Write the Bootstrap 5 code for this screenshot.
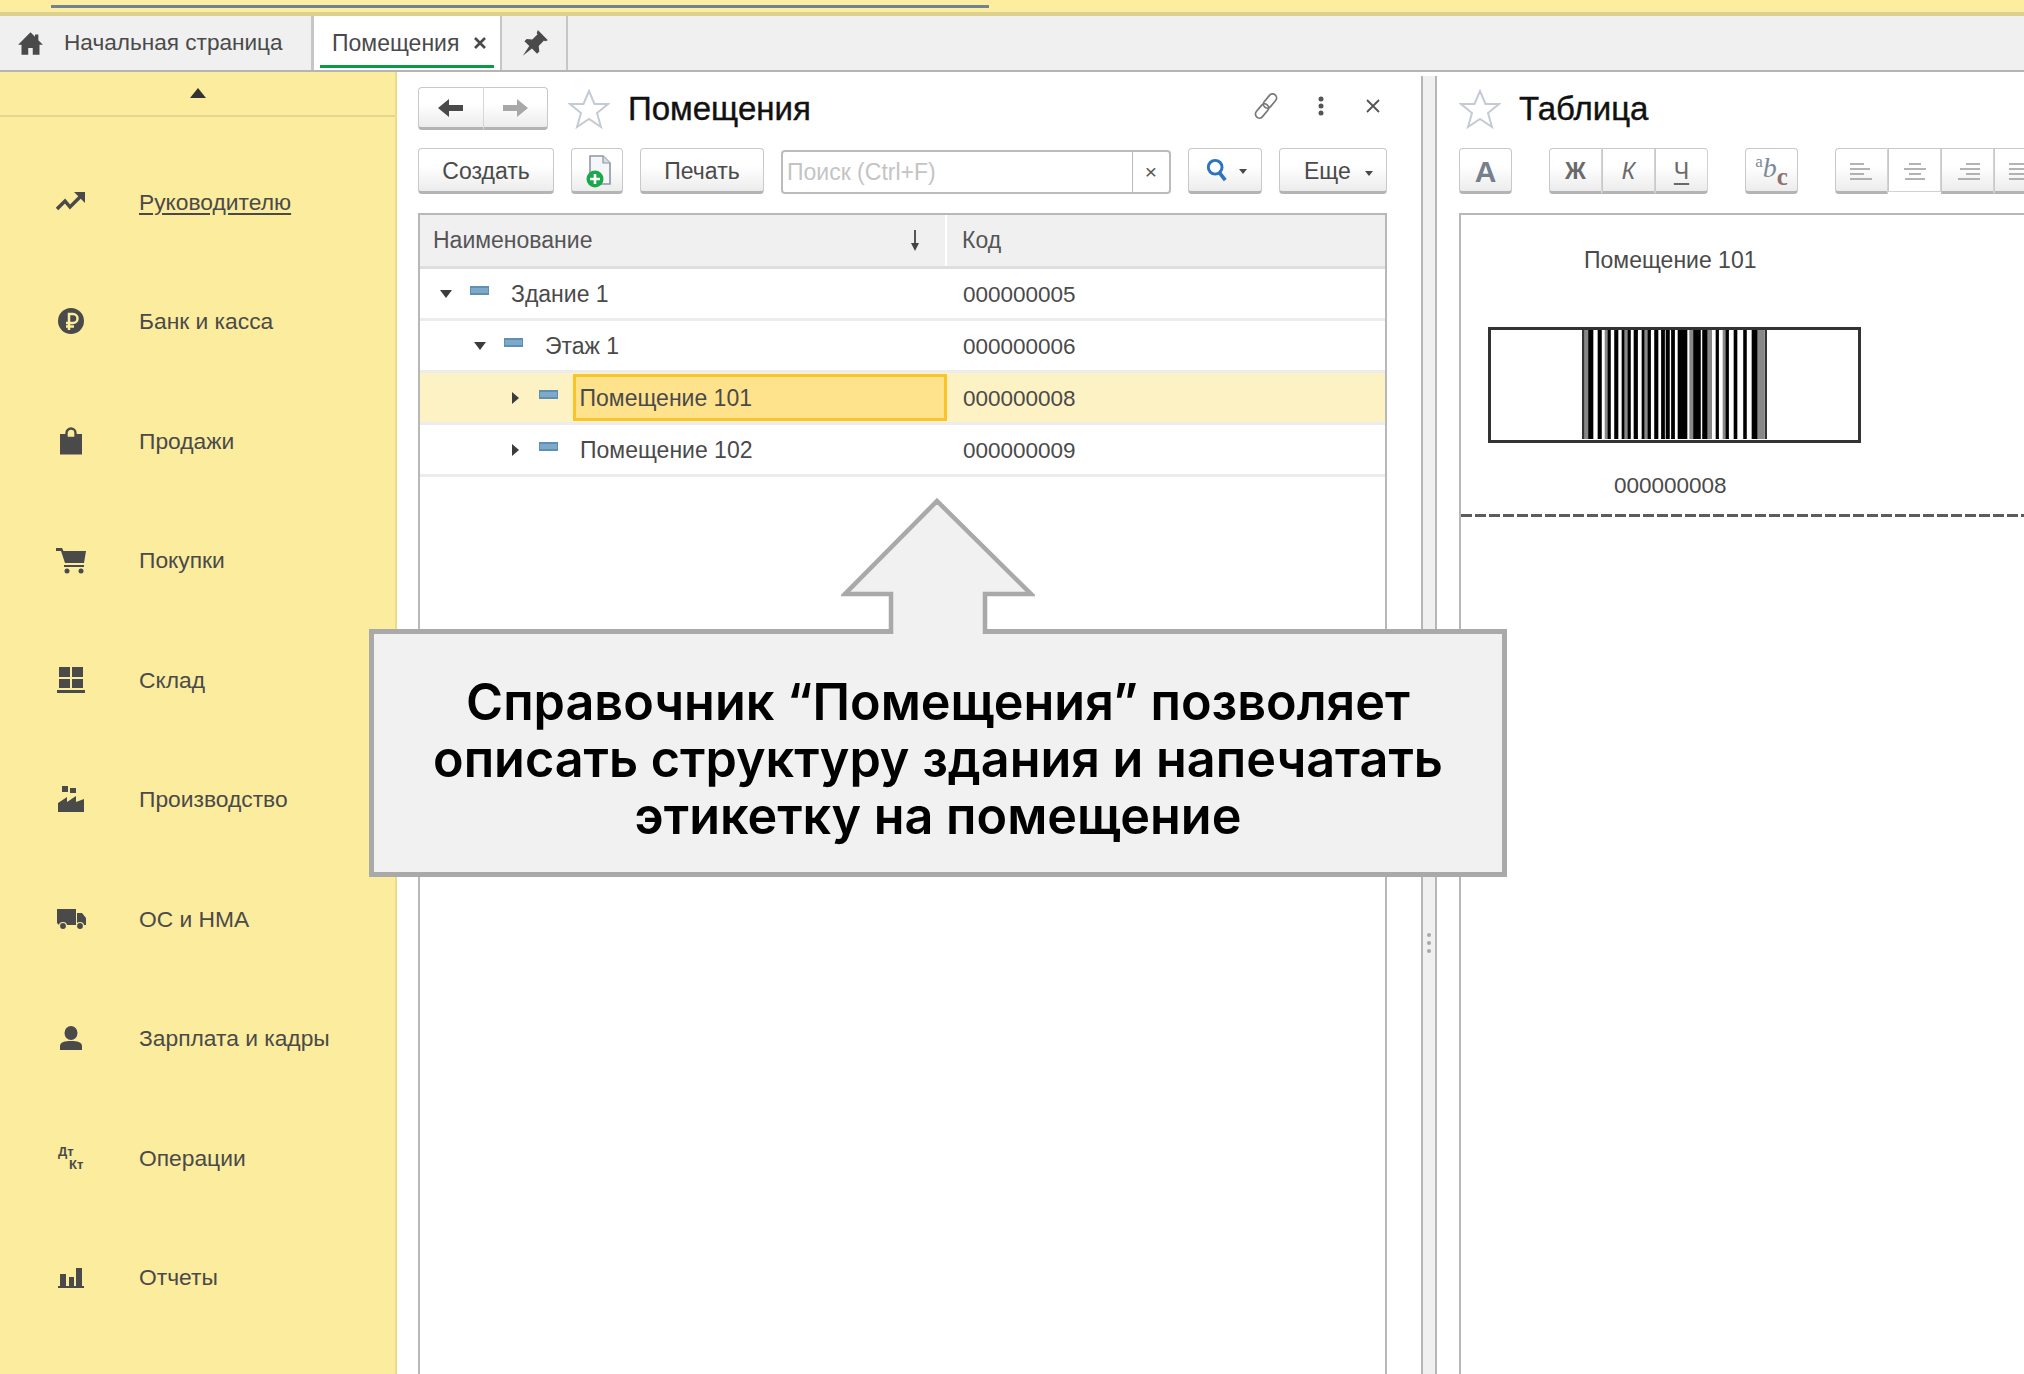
<!DOCTYPE html>
<html lang="ru">
<head>
<meta charset="utf-8">
<title>Помещения</title>
<link href="https://cdn.jsdelivr.net/npm/bootstrap@5.3.0/dist/css/bootstrap.min.css" rel="stylesheet">
<style>
html,body{height:100%;margin:0;overflow:hidden}
body{font-family:"Liberation Sans",Arial,sans-serif;font-size:23px;color:#4a4a4a;background:#fff;position:relative;width:2024px;height:1374px}
.topstrip{height:16px;background:linear-gradient(#fdee9f 0 12px,#dcd08c 12px);flex:none;overflow:hidden}
.topline{height:3px;margin-left:51px;width:938px;margin-top:5px;display:block;background:#6f8296}
.tabbar{height:56px;flex:none;background:#f0f0f0;border-bottom:2px solid #b4b4b4}
.tabit{height:100%;display:flex;align-items:center;border-right:2px solid #c6c6c6;position:relative}
.tab-home{width:313px;padding-left:17px;gap:20px;font-size:22.6px}
.tab-act{width:189px;background:#fff;padding-left:18px;gap:14px;border-left:1px solid #c6c6c6}
.tab-act::after{content:"";position:absolute;left:6px;right:6px;bottom:2px;height:3px;background:#0a9a44}
.tab-pin{width:66px;justify-content:center}
.side{width:397px;flex:none;background:#fcec9d;border-right:2px solid #ecdc8a}
.side-up{height:45px;border-bottom:2px solid #e4d68e;display:flex;justify-content:center;padding-top:16px}
.tri-up{width:0;height:0;border-left:8px solid transparent;border-right:8px solid transparent;border-bottom:10px solid #333}
.side-list{padding-top:25px}
.side-item{height:119.5px;display:flex;align-items:center;color:#4a4a4a;font-size:22.8px}
.side-ico{width:30px;margin-left:56px;margin-right:53px;display:flex;justify-content:center}
.side-item u{text-underline-offset:3px}
.work{min-width:0;background:#fff}
.leftpane{width:1024px;flex:none;padding:15px 34px 0 21px}
.rightpane{flex:1;min-width:0;padding:15px 0 0 22px;overflow:hidden}
.splitter{width:16px;flex:none;background:#f0f0f0;border-left:2px solid #b6b6b6;border-right:2px solid #b6b6b6;margin-top:4px;display:flex;flex-direction:column;align-items:center;justify-content:center;gap:4px;padding-top:436px}
.splitter i{width:4px;height:4px;border-radius:50%;background:#a8a8a8;display:block}
.headrow{height:43px}
.titletxt{font-size:33px;color:#111;line-height:1;-webkit-text-stroke:.4px #111}
.starw{margin:0 18px 0 20px;display:flex}
.headacts{margin-left:auto;padding-right:7px;margin-top:-5px}
.act-link{margin-right:37px;display:flex}
.act-dots{margin-right:42px;display:flex}
.onec-btn{height:46px;background:linear-gradient(#fff 40%,#ececec);border:1px solid #c9c9c9;border-bottom:3px solid #b4b4b4;border-radius:4px;color:#4a4a4a;font-size:23px;padding:3px 0 0;display:flex;align-items:center;justify-content:center;line-height:1}
.navgrp{width:130px;height:43px;display:flex}
.navgrp .onec-btn{flex:1;height:43px;border-radius:0;padding:0}
.navgrp .onec-btn:first-child{border-radius:4px 0 0 4px;border-right:1px solid #d6d6d6}
.navgrp .onec-btn:last-child{border-radius:0 4px 4px 0;border-left:0}
.toolrow{margin-top:18px;gap:17px}
.w-create{width:136px}.w-add{width:52px}.w-print{width:124px}.w-find{width:74px;gap:11px;padding:0 0 0 2px}
.w-more{width:108px;gap:14px;justify-content:flex-start;padding-left:24px}
.w-add svg{margin-left:3px;margin-top:-2px}
.caretdn{width:0;height:0;border-left:4px solid transparent;border-right:4px solid transparent;border-top:5px solid #4a4a4a;margin-top:3px}
.findbox{flex:1;height:44px;margin-top:2px;border:2px solid #bcbcbc;border-radius:4px;display:flex;background:#fff}
.findtxt{flex:1;padding-left:4px;color:#c4c4c4;display:flex;align-items:center}
.findx{width:37px;border-left:1px solid #bcbcbc;display:flex;align-items:center;justify-content:center;font-size:21px;color:#555}
.gridbox{margin-top:19px;border:2px solid #b8b8b8;border-bottom:0;height:1161px}
.gridhead{height:54px;background:#f0f0f0;border-bottom:3px solid #dedede;display:flex;align-items:center;color:#555}
.col-name{width:527px;flex:none;display:flex;align-items:center;height:100%;padding-left:13px;border-right:2px solid #fff;position:relative}
.col-code{padding-left:15px}
.sortarr{margin-left:auto;margin-right:25px;display:flex}
.gridrow{height:52px;display:flex;align-items:center;border-bottom:3px solid #ececec;color:#4a4a4a}
.tree{width:527px;flex:none;display:flex;align-items:center;height:100%}
.lvl1{padding-left:20px}.lvl2{padding-left:54px}.lvl3{padding-left:89px}
.tw{width:12px;display:flex;justify-content:center}
.tri-dn{width:0;height:0;border-left:6.5px solid transparent;border-right:6.5px solid transparent;border-top:8px solid #3c3c3c}
.tri-rt{width:0;height:0;border-top:6.5px solid transparent;border-bottom:6.5px solid transparent;border-left:7px solid #3c3c3c}
.dash{width:19px;height:9px;background:#7fa9c9;border:2px solid #5e8fb5;border-width:2px 1px;margin-left:18px;margin-right:22px;margin-top:-6px;flex:none}
.lvlcell{flex:1;height:100%;display:flex;align-items:center;min-width:0;padding-top:2px}
.sel{background:#fdf2c4}
.sel .lvlcell{background:#fee28c;border:3px solid #fbc52a;margin-left:-7.500px;padding-left:4px;padding-top:2px;margin-right:0;height:47px}
.codecell{padding-left:16px;font-size:22.5px;padding-top:2px}
.sheet{margin-top:19px;border:2px solid #b8b8b8;border-right:0;border-bottom:0;height:1161px;position:relative;width:700px}
.lab1{padding:31px 0 0 123px;line-height:28px}
.bar-box{width:373px;height:116px;border:3.5px solid #333;margin:53px 0 0 27px;background:#fff;display:flex;justify-content:center}
.lab2{padding:29px 0 0 153px;line-height:28px;font-size:22.5px}
.cutline{margin-top:14px;height:3px;background:repeating-linear-gradient(90deg,#5c5c5c 0 11px,transparent 11px 14px)}
.rtool{gap:37px;margin-top:18px;width:640px}
.sq{width:53px;flex:none}
.rgroup{display:flex}
.rgroup .onec-btn{border-radius:0;width:53px;border-right:1px solid #d2d2d2;color:#6a6a6a}
.rgroup .onec-btn:first-child{border-radius:4px 0 0 4px}
.rgroup .onec-btn:last-child{border-radius:0 4px 4px 0}
.rgroup .onepress{background:#fff;border-bottom:1px solid #d2d2d2;height:44px}
.bold-a{font-weight:700;font-size:30px;color:#76808c}
.italk{font-style:italic}
.ulc{text-decoration:underline;text-underline-offset:4px}
.abcic{font-family:"Liberation Serif",serif;padding:0;align-items:center;gap:0}
.abc-a{font-size:17px;color:#7b8a9c;margin-top:-18px}
.abc-b{font-size:28px;font-style:italic;color:#7b8a9c;margin-top:-4px}
.abc-c{font-size:25px;font-weight:700;color:#8f6f70;margin-top:12px}
.callbox{position:absolute;left:369px;top:629px;width:1138px;height:248px;background:#f1f1f1;border:5px solid #a9a9a9;display:flex;align-items:center;justify-content:center;text-align:center;font-family:Inter,"Open Sans",sans-serif;font-weight:600;font-size:50.300px;line-height:57px;color:#000;padding-top:10px}
.callarrow{position:absolute;left:841px;top:498px;width:194px;height:140px;z-index:2}
</style>
</head>
<body class="d-flex flex-column">
<div class="topstrip"><span class="topline"></span></div>
<div class="tabbar d-flex">
  <div class="tabit tab-home">
    <svg width="27" height="27" viewBox="0 0 24 24"><path fill="#4a4a4a" d="M12 2 1 13h3v9h6v-6h4v6h6v-9h3l-4-4V4h-3v2z"/></svg>
    <span>Начальная страница</span>
  </div>
  <div class="tabit tab-act"><span>Помещения</span>
    <svg width="14" height="14" viewBox="0 0 14 14"><path stroke="#4a4a4a" stroke-width="2.6" d="M2 2l10 10M12 2 2 12"/></svg>
  </div>
  <div class="tabit tab-pin">
    <svg width="29" height="29" viewBox="0 0 26 26"><path fill="#4a4a4a" d="M16 1l9 9-2.5 1-1-.8-4.700 5 .5 5-2 2-4.600-4.800L2.500 24l5.800-8.700L4 11l2-2 5 .5 4.800-4.700-.8-1z"/></svg>
  </div>
</div>
<div class="d-flex flex-grow-1 overflow-hidden">
  <nav class="side">
    <div class="side-up"><span class="tri-up"></span></div>
    <div class="side-list">
      <div class="side-item"><span class="side-ico"><svg width="30" height="22" viewBox="0 0 30 22"><path fill="none" stroke="#4a4a4a" stroke-width="3.500" d="M1 18l8-8 5 6L26 4"/><path fill="#4a4a4a" d="M18 1h11v11z"/></svg></span><u>Руководителю</u></div>
      <div class="side-item"><span class="side-ico"><svg width="26" height="26" viewBox="0 0 26 26"><circle cx="13" cy="13" r="13" fill="#4a4a4a"/><path fill="none" stroke="#fcec9d" stroke-width="2.500" d="M11 22V6h4a4 4 0 0 1 0 9H8M8 18.500h8"/></svg></span>Банк и касса</div>
      <div class="side-item"><span class="side-ico"><svg width="24" height="28" viewBox="0 0 24 28"><path fill="#4a4a4a" d="M1 7h22v20.500H1z"/><path fill="#fcec9d" stroke="#4a4a4a" stroke-width="2.400" d="M7.500 11V6a4.500 4.500 0 0 1 9 0v5z"/></svg></span>Продажи</div>
      <div class="side-item"><span class="side-ico"><svg width="30" height="27" viewBox="0 0 30 27"><path fill="#4a4a4a" d="M0 1h6l1.500 3H30l-2 12H9L5 4H0z"/><path fill="#4a4a4a" d="M8 18h20v2H8z"/><circle cx="11" cy="24" r="2.500" fill="#4a4a4a"/><circle cx="25" cy="24" r="2.500" fill="#4a4a4a"/></svg></span>Покупки</div>
      <div class="side-item"><span class="side-ico"><svg width="28" height="26" viewBox="0 0 28 26"><path fill="#4a4a4a" d="M2 0h11v10H2zM15 0h11v10H15zM2 12h11v9H2zM15 12h11v9H15zM0 23h28v3H0z"/></svg></span>Склад</div>
      <div class="side-item"><span class="side-ico"><svg width="28" height="26" viewBox="0 0 28 26"><path fill="#4a4a4a" d="M5 0h6v6H5zM13 2h6v5h-6zM1 26V17l9-6v5l9-6v6l8-3v13z"/></svg></span>Производство</div>
      <div class="side-item"><span class="side-ico"><svg width="30" height="22" viewBox="0 0 30 22"><path fill="#4a4a4a" d="M1 1h19v16H3l-2-2zM21 5h5l4 5v7h-9z"/><circle cx="7" cy="18" r="3.500" fill="#4a4a4a" stroke="#fcec9d" stroke-width="1.200"/><circle cx="24" cy="18" r="3.500" fill="#4a4a4a" stroke="#fcec9d" stroke-width="1.200"/></svg></span>ОС и НМА</div>
      <div class="side-item"><span class="side-ico"><svg width="24" height="24" viewBox="0 0 24 24"><ellipse cx="12" cy="7" rx="6.500" ry="7" fill="#4a4a4a"/><path fill="#4a4a4a" d="M1 24v-4c0-4 5-5 11-5s11 1 11 5v4z"/></svg></span>Зарплата и кадры</div>
      <div class="side-item"><span class="side-ico"><svg width="30" height="26" viewBox="0 0 30 26"><text x="2" y="11" font-family="Liberation Sans" font-weight="700" font-size="13" fill="#4a4a4a">Дт</text><text x="13" y="24" font-family="Liberation Sans" font-weight="700" font-size="13" fill="#4a4a4a">Кт</text></svg></span>Операции</div>
      <div class="side-item"><span class="side-ico"><svg width="26" height="22" viewBox="0 0 26 22"><path fill="#4a4a4a" d="M2 8h6v12H2zM11 11h5v9h-5zM18 2h6v18h-6zM0 20h26v2H0z"/></svg></span>Отчеты</div>
    </div>
  </nav>
  <main class="work d-flex flex-grow-1">
    <section class="leftpane">
      <div class="headrow d-flex align-items-center">
        <div class="navgrp">
          <button class="onec-btn" type="button"><svg width="26" height="20" viewBox="0 0 26 20"><path fill="#4a4a4a" d="M0 10 11 1v6h14v6H11v6z"/></svg></button>
          <button class="onec-btn" type="button"><svg width="26" height="20" viewBox="0 0 26 20"><path fill="#a8a8a8" d="M26 10 15 1v6H1v6h14v6z"/></svg></button>
        </div>
        <span class="starw"><svg width="42" height="40" viewBox="0 0 42 40"><path fill="#fff" stroke="#c5cbd2" stroke-width="2" d="M21 2l5.500 13H40l-11 9 4 14-12-8-12 8 4-14L2 15h13.500z"/></svg></span>
        <span class="titletxt">Помещения</span>
        <div class="headacts d-flex align-items-center">
          <span class="act-link"><svg width="30" height="30" viewBox="0 0 30 30"><g fill="none" stroke="#777" stroke-width="1.700"><rect x="15" y="2" width="8" height="16" rx="4" transform="rotate(40 19 10)"/><rect x="7" y="12" width="8" height="16" rx="4" transform="rotate(40 11 20)"/></g></svg></span>
          <span class="act-dots"><svg width="6" height="20" viewBox="0 0 6 20"><circle cx="3" cy="3" r="2.500" fill="#555"/><circle cx="3" cy="10" r="2.500" fill="#555"/><circle cx="3" cy="17" r="2.500" fill="#555"/></svg></span>
          <svg width="14" height="14" viewBox="0 0 14 14"><path stroke="#555" stroke-width="1.800" d="M1 1l12 12M13 1 1 13"/></svg>
        </div>
      </div>
      <div class="toolrow d-flex">
        <button class="onec-btn w-create" type="button">Создать</button>
        <button class="onec-btn w-add" type="button"><svg width="30" height="34" viewBox="0 0 30 34"><path fill="#f4f6f8" stroke="#8d97a3" stroke-width="1.600" d="M6 2h13l7 7v21H6z"/><path fill="#d8dde2" stroke="#8d97a3" stroke-width="1.200" d="M19 2v7h7"/><circle cx="11" cy="25" r="8.500" fill="#1aa84b"/><path stroke="#fff" stroke-width="2.600" d="M11 20v10M6 25h10"/></svg></button>
        <button class="onec-btn w-print" type="button">Печать</button>
        <div class="findbox"><span class="findtxt">Поиск (Ctrl+F)</span><span class="findx">×</span></div>
        <button class="onec-btn w-find" type="button"><svg width="22" height="24" viewBox="0 0 24 26"><circle cx="10" cy="10" r="7.500" fill="none" stroke="#2c74bd" stroke-width="3.200"/><path stroke="#2c74bd" stroke-width="4" d="M14 15l7 9"/></svg><span class="caretdn"></span></button>
        <button class="onec-btn w-more" type="button">Еще<span class="caretdn"></span></button>
      </div>
      <div class="gridbox">
        <div class="gridhead">
          <div class="col-name">Наименование<span class="sortarr"><svg width="10" height="21" viewBox="0 0 10 21"><path stroke="#444" stroke-width="1.800" d="M5 0v15"/><path fill="#444" d="M1 13h8l-4 8z"/></svg></span></div>
          <div class="col-code">Код</div>
        </div>
        <div class="gridrow"><div class="tree lvl1"><span class="tw"><span class="tri-dn"></span></span><span class="dash"></span><span class="lvlcell">Здание 1</span></div><div class="codecell">000000005</div></div>
        <div class="gridrow"><div class="tree lvl2"><span class="tw"><span class="tri-dn"></span></span><span class="dash"></span><span class="lvlcell">Этаж 1</span></div><div class="codecell">000000006</div></div>
        <div class="gridrow sel"><div class="tree lvl3"><span class="tw"><span class="tri-rt"></span></span><span class="dash"></span><span class="lvlcell">Помещение 101</span></div><div class="codecell">000000008</div></div>
        <div class="gridrow"><div class="tree lvl3"><span class="tw"><span class="tri-rt"></span></span><span class="dash"></span><span class="lvlcell">Помещение 102</span></div><div class="codecell">000000009</div></div>
      </div>
    </section>
    <div class="splitter"><i></i><i></i><i></i></div>
    <section class="rightpane">
      <div class="headrow d-flex align-items-center">
        <span class="starw ms-0"><svg width="42" height="40" viewBox="0 0 42 40"><path fill="#fff" stroke="#c5cbd2" stroke-width="2" d="M21 2l5.500 13H40l-11 9 4 14-12-8-12 8 4-14L2 15h13.500z"/></svg></span>
        <span class="titletxt">Таблица</span>
      </div>
      <div class="rtool d-flex">
        <button class="onec-btn sq bold-a" type="button">А</button>
        <div class="rgroup">
          <button class="onec-btn fw-bold" type="button">Ж</button>
          <button class="onec-btn italk" type="button">К</button>
          <button class="onec-btn ulc" type="button">Ч</button>
        </div>
        <button class="onec-btn sq abcic" type="button"><span class="abc-a">a</span><span class="abc-b">b</span><span class="abc-c">c</span></button>
        <div class="rgroup">
          <button class="onec-btn" type="button"><svg width="24" height="20" viewBox="0 0 24 20"><path stroke="#9a9a9a" stroke-width="1.600" d="M0 2h14M0 7h20M0 12h14M0 17h22"/></svg></button>
          <button class="onec-btn onepress" type="button"><svg width="24" height="20" viewBox="0 0 24 20"><path stroke="#9a9a9a" stroke-width="1.600" d="M6 2h12M1 7h22M6 12h12M2 17h20"/></svg></button>
          <button class="onec-btn" type="button"><svg width="24" height="20" viewBox="0 0 24 20"><path stroke="#9a9a9a" stroke-width="1.600" d="M10 2h14M4 7h20M10 12h14M2 17h22"/></svg></button>
          <button class="onec-btn" type="button"><svg width="24" height="20" viewBox="0 0 24 20"><path stroke="#9a9a9a" stroke-width="1.600" d="M0 2h24M0 7h24M0 12h24M0 17h24"/></svg></button>
        </div>
      </div>
      <div class="sheet">
        <div class="lab1">Помещение 101</div>
        <div class="bar-box">
          <svg width="185" height="109" viewBox="310 0 555 100" preserveAspectRatio="none">
            <path fill="#333" d="M310 0h8v100h-8zM858 0h7v100h-7z"/>
            <path fill="#888" d="M318 0h12v100h-12zM378 0h10v100h-10zM436 0h12v100h-12zM496 0h12v100h-12zM632 0h13v100h-13zM685 0h15v100h-15zM732 0h10v100h-10zM835 0h23v100h-23z"/>
            <path fill="#000" stroke="#000" stroke-width="2" d="M330 0h13v100h-13zM358 0h10v100h-10zM388 0h7v100h-7zM408 0h10v100h-10zM430 0h6v100h-6zM448 0h7v100h-7zM466 0h11v100h-11zM490 0h6v100h-6zM508 0h8v100h-8zM528 0h10v100h-10zM548 0h10v100h-10zM562 0h10v100h-10zM578 0h10v100h-10zM598 0h14v100h-14zM612 0h13v100h-13zM645 0h20v100h-20zM672 0h13v100h-13zM712 0h8v100h-8zM742 0h8v100h-8zM766 0h9v100h-9zM795 0h8v100h-8zM820 0h15v100h-15z"/>
          </svg>
        </div>
        <div class="lab2">000000008</div>
        <div class="cutline"></div>
      </div>
    </section>
  </main>
</div>
<svg class="callarrow" viewBox="0 0 194 140"><path fill="#f1f1f1" stroke="#a9a9a9" stroke-width="4.500" d="M50 136V96H4L96 3 190 96H144V136"/></svg>
<div class="callbox">Справочник “Помещения” позволяет<br>описать структуру здания и напечатать<br>этикетку на помещение</div>
</body>
</html>
